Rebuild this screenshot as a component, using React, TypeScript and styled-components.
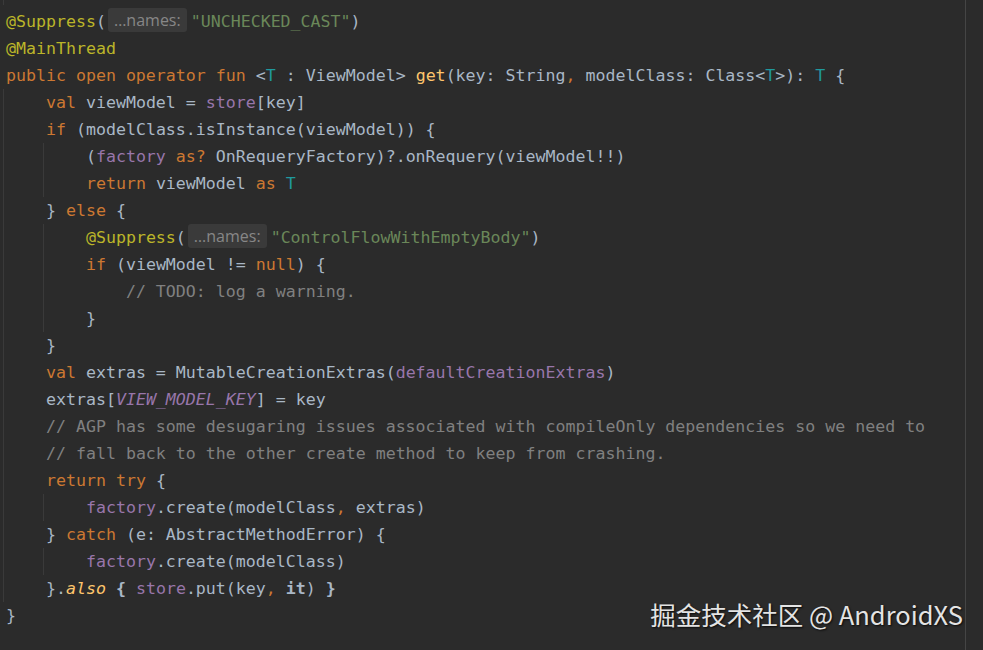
import React from "react";
import styled, { createGlobalStyle, css } from "styled-components";

const Global = createGlobalStyle`
  html, body { margin: 0; padding: 0; background: #2b2b2b; }
  #root { width: 983px; height: 650px; overflow: hidden; }
`;

type Kind =
  | "plain"
  | "kw"
  | "ann"
  | "str"
  | "tp"
  | "fn"
  | "prop"
  | "const"
  | "comment"
  | "ext"
  | "bold"
  | "comma"
  | "hint";

type Tok = [Kind, string];

const palette: Record<Kind, string> = {
  plain: "#a9b7c6",
  kw: "#cc7832",
  ann: "#bbb529",
  str: "#6a8759",
  tp: "#20999d",
  fn: "#ffc66d",
  prop: "#9876aa",
  const: "#9876aa",
  comment: "#808080",
  ext: "#ffc66d",
  bold: "#a9b7c6",
  comma: "#cc7832",
  hint: "#858585",
};

const GUIDE = "#3a3a3a";

const guideBg = (cols: number[]) =>
  cols.length
    ? cols
        .map((c) => `linear-gradient(${GUIDE}, ${GUIDE}) ${c * 10 + 3}px 0 / 1px 100% no-repeat`)
        .join(", ")
    : "none";

const Editor = styled.div`
  position: relative;
  display: flex;
  flex-direction: row;
  width: 983px;
  height: 650px;
  background: #2b2b2b;
  overflow: hidden;
`;

const CodePane = styled.div`
  display: flex;
  flex-direction: column;
  width: 966px;
  flex: none;
  padding-top: 8px;
  box-sizing: border-box;
  border-right: 1px solid #454545;
  background: linear-gradient(${GUIDE}, ${GUIDE}) 3px 0 / 1px 5px no-repeat;
`;

const Line = styled.div<{ $guides: number[] }>`
  height: 27px;
  line-height: 27px;
  padding-left: 6px;
  white-space: pre;
  font-family: "DejaVu Sans Mono", "Liberation Mono", monospace;
  font-size: 16.6px;
  color: #a9b7c6;
  background: ${(p) => guideBg(p.$guides)};
`;

const Token = styled.span<{ $kind: Kind }>`
  color: ${(p) => palette[p.$kind]};
  ${(p) =>
    (p.$kind === "const" || p.$kind === "ext") &&
    css`
      font-style: italic;
    `}
  ${(p) =>
    p.$kind === "bold" &&
    css`
      font-weight: bold;
    `}
`;

const Hint = styled.span`
  display: inline-block;
  height: 24px;
  line-height: 24px;
  margin: 0 4px 0 2px;
  padding: 0 6px 0 6px;
  border-radius: 3px;
  background: #3a3a3a;
  color: #878787;
  font-family: "Open Sans", "Noto Sans", sans-serif;
  font-size: 16px;
  vertical-align: 1px;
`;

const Watermark = styled.div`
  position: absolute;
  right: 20px;
  bottom: 21px;
  font-family: "Noto Sans CJK SC", "Noto Sans", sans-serif;
  font-size: 25.5px;
  line-height: 30px;
  color: #e4e4e4;
  text-shadow: 1px 1px 2px rgba(0, 0, 0, 0.8);
  white-space: nowrap;
`;

type LineData = { guides: number[]; toks: Tok[] };

const L = (guides: number[], ...toks: Tok[]): LineData => ({ guides, toks });

const lines: LineData[] = [
  L([], ["ann", "@Suppress"], ["plain", "("], ["hint", "…names:"], ["str", '"UNCHECKED_CAST"'], ["plain", ")"]),
  L([], ["ann", "@MainThread"]),
  L(
    [],
    ["kw", "public open operator fun "],
    ["plain", "<"],
    ["tp", "T"],
    ["plain", " : ViewModel> "],
    ["fn", "get"],
    ["plain", "(key: String"],
    ["comma", ","],
    ["plain", " modelClass: Class<"],
    ["tp", "T"],
    ["plain", ">): "],
    ["tp", "T"],
    ["plain", " {"]
  ),
  L([0], ["plain", "    "], ["kw", "val "], ["plain", "viewModel = "], ["prop", "store"], ["plain", "[key]"]),
  L([0], ["plain", "    "], ["kw", "if "], ["plain", "(modelClass.isInstance(viewModel)) {"]),
  L(
    [0, 4],
    ["plain", "        ("],
    ["prop", "factory"],
    ["kw", " as? "],
    ["plain", "OnRequeryFactory)?.onRequery(viewModel!!)"]
  ),
  L([0, 4], ["plain", "        "], ["kw", "return "], ["plain", "viewModel "], ["kw", "as "], ["tp", "T"]),
  L([0], ["plain", "    } "], ["kw", "else "], ["plain", "{"]),
  L(
    [0, 4],
    ["plain", "        "],
    ["ann", "@Suppress"],
    ["plain", "("],
    ["hint", "…names:"],
    ["str", '"ControlFlowWithEmptyBody"'],
    ["plain", ")"]
  ),
  L([0, 4], ["plain", "        "], ["kw", "if "], ["plain", "(viewModel != "], ["kw", "null"], ["plain", ") {"]),
  L([0, 4], ["plain", "            "], ["comment", "// TODO: log a warning."]),
  L([0, 4], ["plain", "        }"]),
  L([0], ["plain", "    }"]),
  L(
    [0],
    ["plain", "    "],
    ["kw", "val "],
    ["plain", "extras = MutableCreationExtras("],
    ["prop", "defaultCreationExtras"],
    ["plain", ")"]
  ),
  L([0], ["plain", "    extras["], ["const", "VIEW_MODEL_KEY"], ["plain", "] = key"]),
  L(
    [0],
    ["plain", "    "],
    ["comment", "// AGP has some desugaring issues associated with compileOnly dependencies so we need to"]
  ),
  L([0], ["plain", "    "], ["comment", "// fall back to the other create method to keep from crashing."]),
  L([0], ["plain", "    "], ["kw", "return try "], ["plain", "{"]),
  L(
    [0, 4],
    ["plain", "        "],
    ["prop", "factory"],
    ["plain", ".create(modelClass"],
    ["comma", ","],
    ["plain", " extras)"]
  ),
  L([0], ["plain", "    } "], ["kw", "catch "], ["plain", "(e: AbstractMethodError) {"]),
  L([0, 4], ["plain", "        "], ["prop", "factory"], ["plain", ".create(modelClass)"]),
  L(
    [0],
    ["plain", "    }."],
    ["ext", "also"],
    ["plain", " "],
    ["bold", "{"],
    ["plain", " "],
    ["prop", "store"],
    ["plain", ".put(key"],
    ["comma", ","],
    ["plain", " "],
    ["bold", "it"],
    ["plain", ") "],
    ["bold", "}"]
  ),
  L([], ["plain", "}"]),
];

export default function App() {
  return (
    <>
      <Global />
      <Editor>
        <CodePane>
          {lines.map((ln, i) => (
            <Line key={i} $guides={ln.guides}>
              {ln.toks.map(([k, t], j) =>
                k === "hint" ? (
                  <Hint key={j}>{t}</Hint>
                ) : (
                  <Token key={j} $kind={k}>
                    {t}
                  </Token>
                )
              )}
            </Line>
          ))}
        </CodePane>
        <Watermark>掘金技术社区 @ AndroidXS</Watermark>
      </Editor>
    </>
  );
}
